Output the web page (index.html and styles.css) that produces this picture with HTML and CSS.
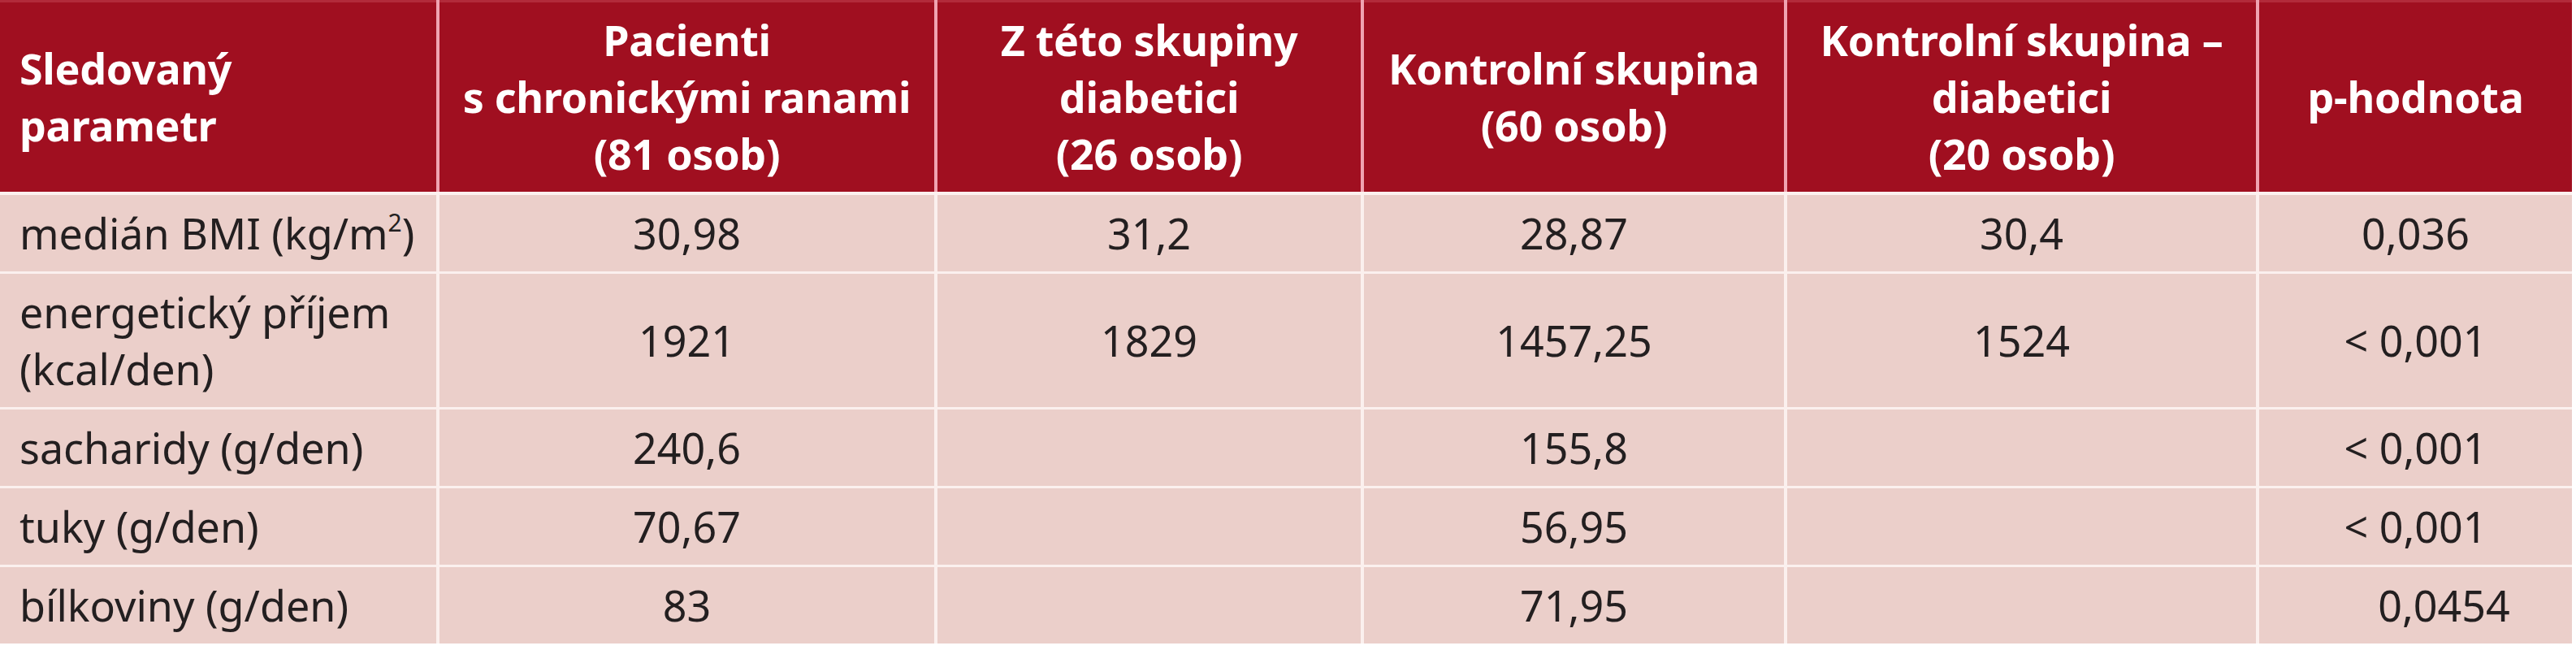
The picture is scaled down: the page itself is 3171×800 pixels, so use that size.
FILE: index.html
```html
<!DOCTYPE html>
<html lang="cs">
<head>
<meta charset="utf-8">
<title>Tabulka</title>
<link rel="stylesheet" href="styles.css">
</head>
<body>
<table class="data">
  <colgroup>
    <col class="c1"><col class="c2"><col class="c3"><col class="c4"><col class="c5"><col class="c6">
  </colgroup>
  <thead>
    <tr>
      <th class="left">Sledovaný<br>parametr</th>
      <th>Pacienti<br>s chronickými ranami<br>(81 osob)</th>
      <th>Z této skupiny<br>diabetici<br>(26 osob)</th>
      <th>Kontrolní skupina<br>(60 osob)</th>
      <th>Kontrolní skupina –<br>diabetici<br>(20 osob)</th>
      <th>p-hodnota</th>
    </tr>
  </thead>
  <tbody>
    <tr>
      <td class="left">medián BMI (kg/m<sup>2</sup>)</td>
      <td>30,98</td>
      <td>31,2</td>
      <td>28,87</td>
      <td>30,4</td>
      <td>0,036</td>
    </tr>
    <tr>
      <td class="left">energetický příjem<br>(kcal/den)</td>
      <td>1921</td>
      <td>1829</td>
      <td>1457,25</td>
      <td>1524</td>
      <td>&lt; 0,001</td>
    </tr>
    <tr>
      <td class="left">sacharidy (g/den)</td>
      <td>240,6</td>
      <td></td>
      <td>155,8</td>
      <td></td>
      <td>&lt; 0,001</td>
    </tr>
    <tr>
      <td class="left">tuky (g/den)</td>
      <td>70,67</td>
      <td></td>
      <td>56,95</td>
      <td></td>
      <td>&lt; 0,001</td>
    </tr>
    <tr>
      <td class="left">bílkoviny (g/den)</td>
      <td>83</td>
      <td></td>
      <td>71,95</td>
      <td></td>
      <td class="shift">0,0454</td>
    </tr>
  </tbody>
</table>
</body>
</html>
```

FILE: styles.css
```css
html, body {
  margin: 0;
  padding: 0;
  background: #ffffff;
}

body {
  font-family: "Noto Sans", "Open Sans", sans-serif;
  color: #231f20;
}

.data {
  border-collapse: collapse;
  table-layout: fixed;
  width: 3166px;
}

.c1 { width: 539px; }
.c2 { width: 613px; }
.c3 { width: 525px; }
.c4 { width: 521px; }
.c5 { width: 581px; }
.c6 { width: 387px; }

.data th {
  background: #a00f20;
  color: #ffffff;
  font-weight: 700;
  font-size: 52px;
  line-height: 70px;
  letter-spacing: -0.3px;
  padding: 11px 12px 12px;
  text-align: center;
  vertical-align: middle;
  border-top: 3px solid #b22a3a;
  border-right: 4px solid #f0a3b1;
  border-bottom: 4px solid #fcf1ef;
}

.data th:last-child {
  border-right: 0;
}

.data td {
  background: #ebcfca;
  font-size: 52px;
  line-height: 70px;
  padding: 12px 12px 12px;
  text-align: center;
  vertical-align: middle;
  border-right: 4px solid #fbf0ee;
  border-bottom: 3px solid #fbf0ee;
}

.data td:last-child {
  border-right: 0;
}

.data tbody tr:last-child td {
  border-bottom: 0;
}

.data .left {
  text-align: left;
  padding-left: 24px;
}

.data sup {
  font-size: 30px;
  line-height: 0;
  vertical-align: 22px;
}

.data .shift {
  padding-left: 82px;
}
```
